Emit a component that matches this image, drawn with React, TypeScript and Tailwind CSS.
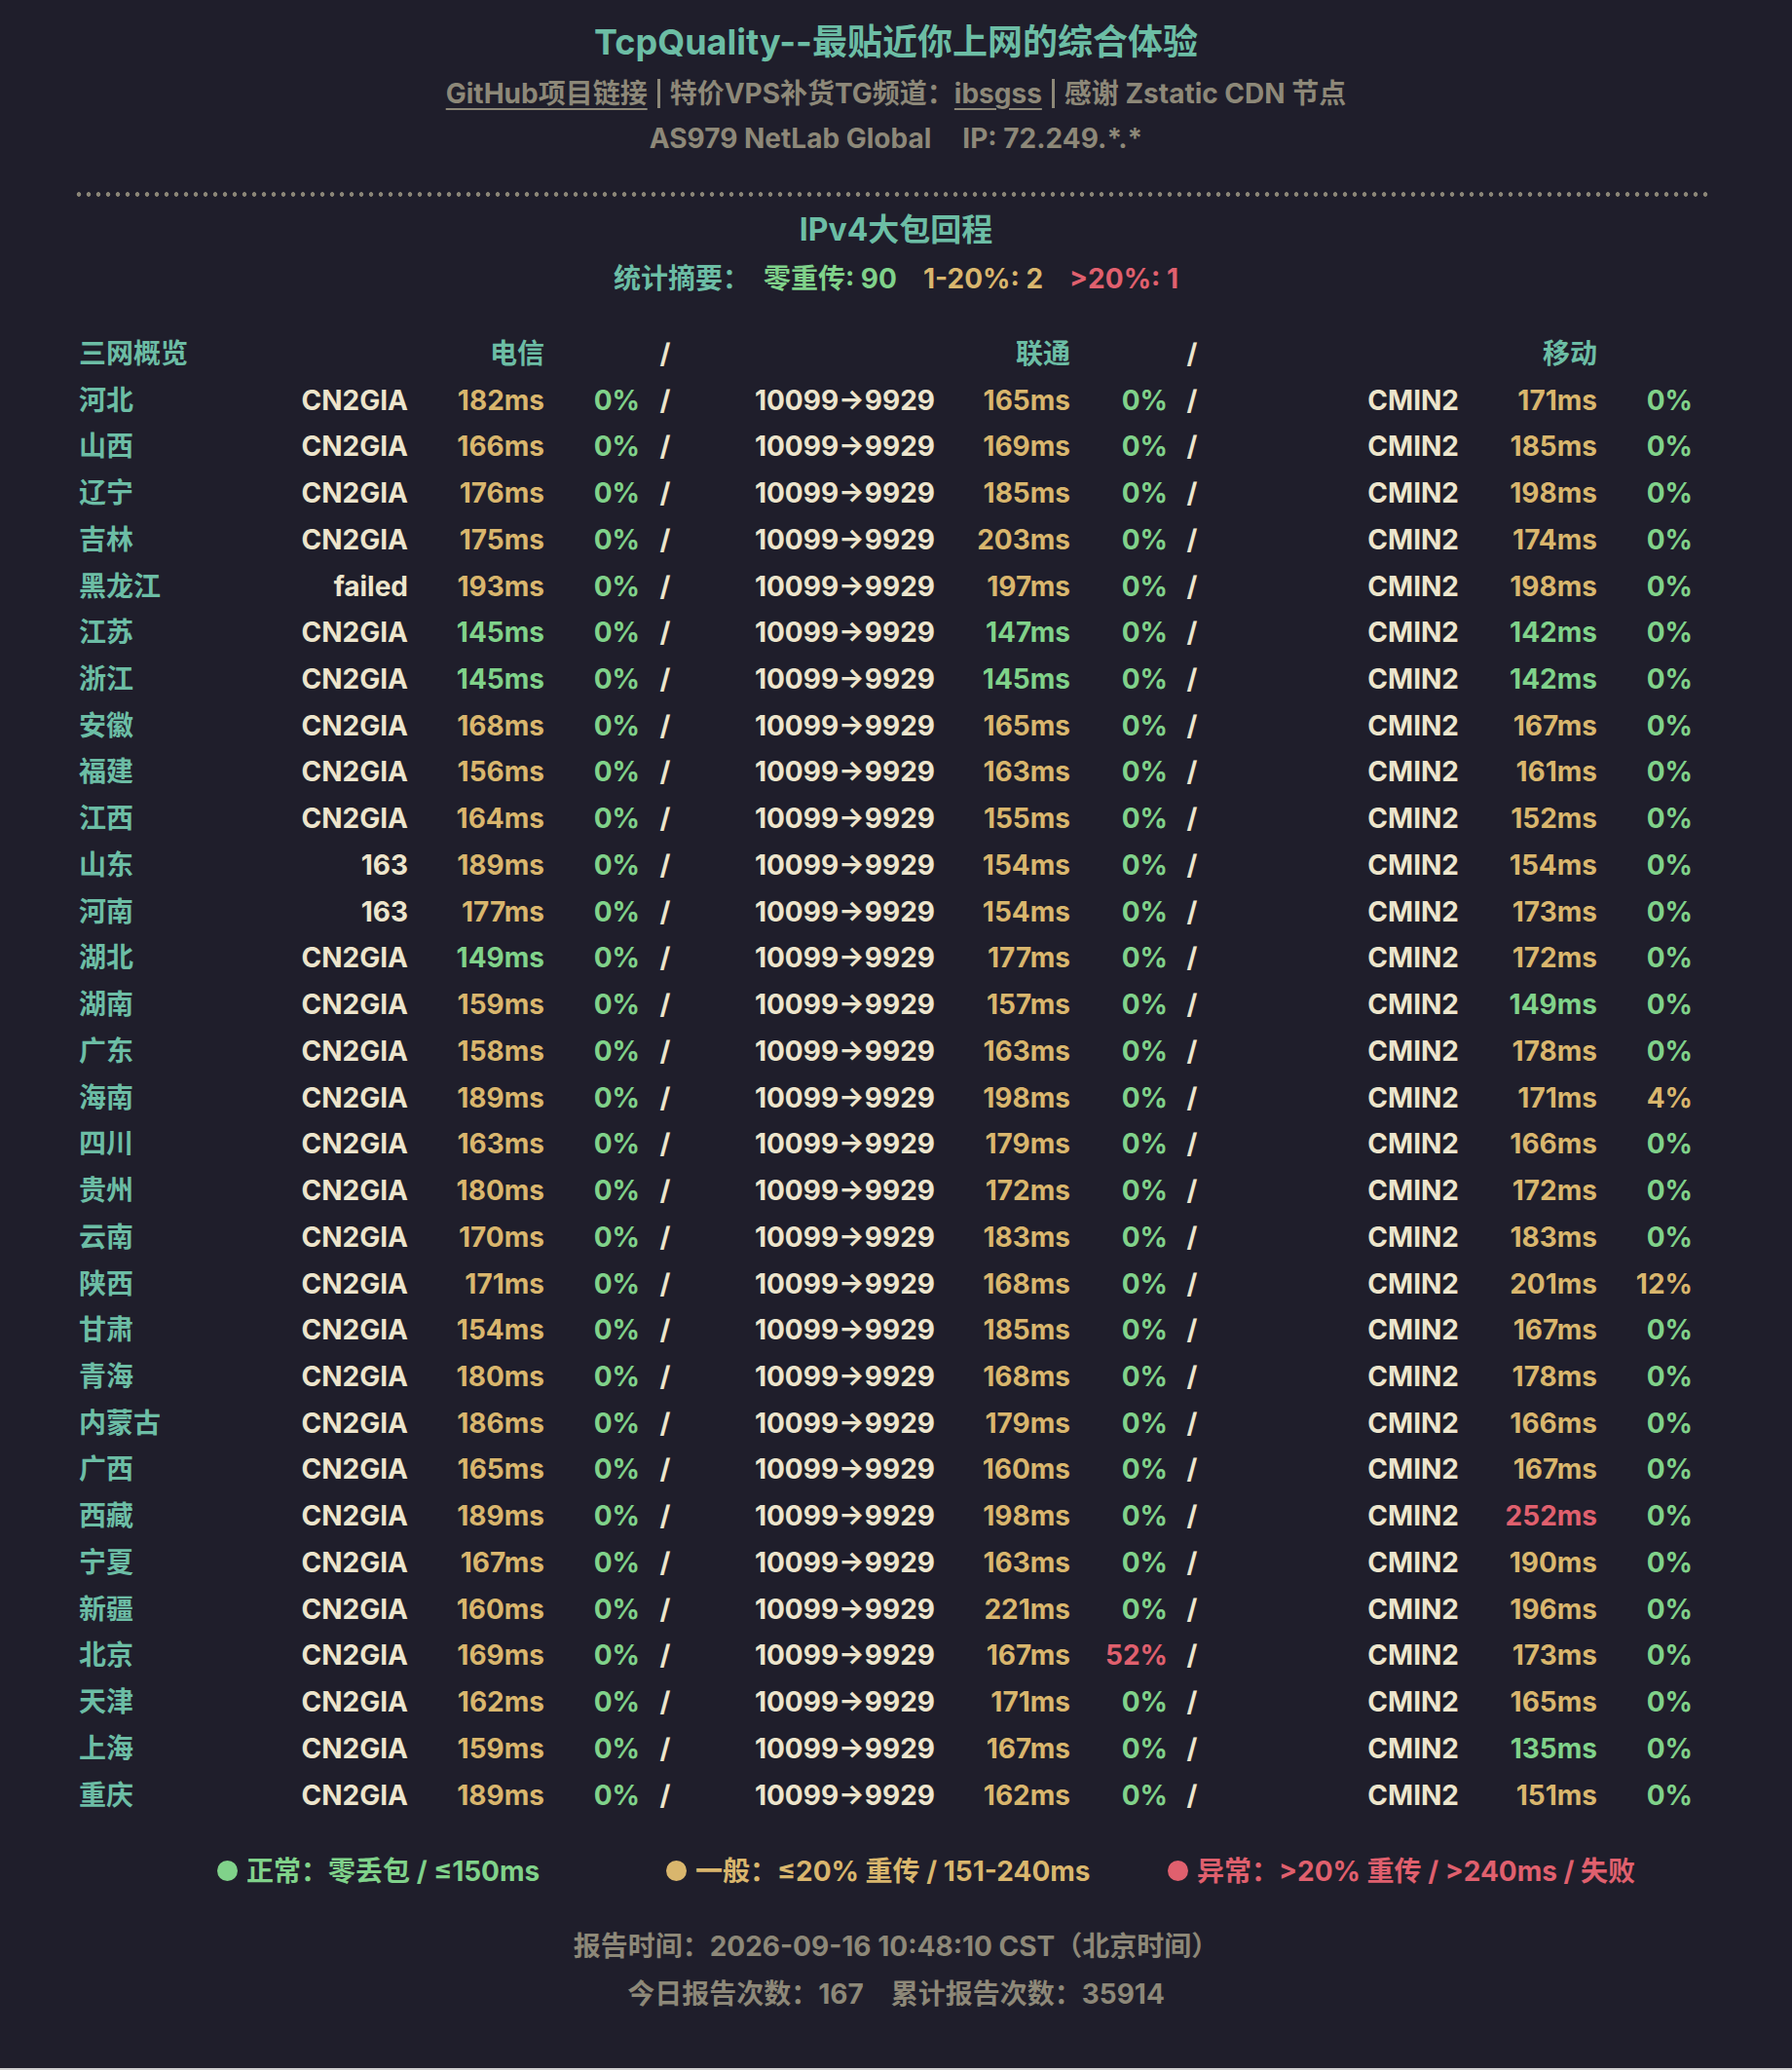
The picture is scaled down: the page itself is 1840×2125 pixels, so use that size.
import React from "react";

type Row = [string, string, number, number, number, number, number, number];

const rows: Row[] = [
  ["河北", "CN2GIA", 182, 0, 165, 0, 171, 0],
  ["山西", "CN2GIA", 166, 0, 169, 0, 185, 0],
  ["辽宁", "CN2GIA", 176, 0, 185, 0, 198, 0],
  ["吉林", "CN2GIA", 175, 0, 203, 0, 174, 0],
  ["黑龙江", "failed", 193, 0, 197, 0, 198, 0],
  ["江苏", "CN2GIA", 145, 0, 147, 0, 142, 0],
  ["浙江", "CN2GIA", 145, 0, 145, 0, 142, 0],
  ["安徽", "CN2GIA", 168, 0, 165, 0, 167, 0],
  ["福建", "CN2GIA", 156, 0, 163, 0, 161, 0],
  ["江西", "CN2GIA", 164, 0, 155, 0, 152, 0],
  ["山东", "163", 189, 0, 154, 0, 154, 0],
  ["河南", "163", 177, 0, 154, 0, 173, 0],
  ["湖北", "CN2GIA", 149, 0, 177, 0, 172, 0],
  ["湖南", "CN2GIA", 159, 0, 157, 0, 149, 0],
  ["广东", "CN2GIA", 158, 0, 163, 0, 178, 0],
  ["海南", "CN2GIA", 189, 0, 198, 0, 171, 4],
  ["四川", "CN2GIA", 163, 0, 179, 0, 166, 0],
  ["贵州", "CN2GIA", 180, 0, 172, 0, 172, 0],
  ["云南", "CN2GIA", 170, 0, 183, 0, 183, 0],
  ["陕西", "CN2GIA", 171, 0, 168, 0, 201, 12],
  ["甘肃", "CN2GIA", 154, 0, 185, 0, 167, 0],
  ["青海", "CN2GIA", 180, 0, 168, 0, 178, 0],
  ["内蒙古", "CN2GIA", 186, 0, 179, 0, 166, 0],
  ["广西", "CN2GIA", 165, 0, 160, 0, 167, 0],
  ["西藏", "CN2GIA", 189, 0, 198, 0, 252, 0],
  ["宁夏", "CN2GIA", 167, 0, 163, 0, 190, 0],
  ["新疆", "CN2GIA", 160, 0, 221, 0, 196, 0],
  ["北京", "CN2GIA", 169, 0, 167, 52, 173, 0],
  ["天津", "CN2GIA", 162, 0, 171, 0, 165, 0],
  ["上海", "CN2GIA", 159, 0, 167, 0, 135, 0],
  ["重庆", "CN2GIA", 189, 0, 162, 0, 151, 0],
];

const GREEN = "text-[#80d28a]";
const YELLOW = "text-[#d9b66d]";
const RED = "text-[#e0606e]";

const msColor = (ms: number) => (ms <= 150 ? GREEN : ms <= 240 ? YELLOW : RED);
const lossColor = (p: number) => (p === 0 ? GREEN : p <= 20 ? YELLOW : RED);

const GRID =
  "grid grid-cols-[222px_119px_140px_98px_52px_251px_139px_100px_50px_249px_142px_98px] h-[47.74px] items-center";

function Slash() {
  return <div className="text-center text-[#ede5cc]">/</div>;
}

export default function App() {
  return (
    <div className="min-h-[2125px] bg-[#d0d0d0]">
      <div className="h-[2123px] bg-[#1f1e2b] font-['Inter','Noto_Sans_CJK_SC',sans-serif] font-bold text-[28px] text-[#8d8878]">
        <div className="pt-[19px] text-center">
          <h1 className="text-[36px] leading-[48px] font-bold text-[#6cbda5]">
            TcpQuality--最贴近你上网的综合体验
          </h1>
          <div className="mt-[9px] leading-[40px] flex justify-center items-center">
            <span className="underline decoration-2 underline-offset-[5px]">GitHub项目链接</span>
            <span className="inline-block w-[3px] h-[30px] mx-[10px] bg-[#8d8878]" />
            <span>特价VPS补货TG频道：</span>
            <span className="underline decoration-2 underline-offset-[5px]">ibsgss</span>
            <span className="inline-block w-[3px] h-[30px] mx-[10px] bg-[#8d8878]" />
            <span>感谢 Zstatic CDN 节点</span>
          </div>
          <div className="mt-[6px] leading-[40px]">
            <span>AS979 NetLab Global</span>
            <span className="ml-[32px]">IP: 72.249.*.*</span>
          </div>
        </div>

        <div className="ml-[76px] mr-[84px] mt-[35px] h-[5px] bg-[radial-gradient(circle,#8a8577_2px,transparent_2.6px)] bg-[length:10px_5px]" />

        <div className="mt-[14px] text-center text-[32px] leading-[40px] text-[#6cbda5]">IPv4大包回程</div>
        <div className="mt-[10px] text-center leading-[40px]">
          <span className="text-[#6cbda5]">统计摘要：</span>
          <span className={`ml-[14px] ${GREEN}`}>零重传: 90</span>
          <span className={`ml-[27px] ${YELLOW}`}>1-20%: 2</span>
          <span className={`ml-[27px] ${RED}`}>&gt;20%: 1</span>
        </div>

        <div className="mt-[33px] px-[78px]">
          <div className={GRID}>
            <div className="pl-[3px] text-[#6cbda5]">三网概览</div>
            <div />
            <div className="text-right text-[#6cbda5]">电信</div>
            <div />
            <Slash />
            <div />
            <div className="text-right text-[#6cbda5]">联通</div>
            <div />
            <Slash />
            <div />
            <div className="text-right text-[#6cbda5]">移动</div>
            <div />
          </div>
          {rows.map((r) => (
            <div key={r[0]} className={GRID}>
              <div className="pl-[3px] text-[#6cbda5]">{r[0]}</div>
              <div className="text-right text-[#ede5cc]">{r[1]}</div>
              <div className={`text-right ${msColor(r[2])}`}>{r[2]}ms</div>
              <div className={`text-right ${lossColor(r[3])}`}>{r[3]}%</div>
              <Slash />
              <div className="text-right text-[#ede5cc]">10099→9929</div>
              <div className={`text-right ${msColor(r[4])}`}>{r[4]}ms</div>
              <div className={`text-right ${lossColor(r[5])}`}>{r[5]}%</div>
              <Slash />
              <div className="text-right text-[#ede5cc]">CMIN2</div>
              <div className={`text-right ${msColor(r[6])}`}>{r[6]}ms</div>
              <div className={`text-right ${lossColor(r[7])}`}>{r[7]}%</div>
            </div>
          ))}
        </div>

        <div className="mt-[34px] flex items-center pl-[223px] leading-[40px]">
          <div className={`w-[461px] flex items-center ${GREEN}`}>
            <span className="inline-block w-[21px] h-[21px] rounded-full bg-[#80d28a] mr-[9px]" />
            <span>正常：零丢包 / ≤150ms</span>
          </div>
          <div className={`w-[515px] flex items-center ${YELLOW}`}>
            <span className="inline-block w-[21px] h-[21px] rounded-full bg-[#d9b66d] mr-[9px]" />
            <span>一般：≤20% 重传 / 151-240ms</span>
          </div>
          <div className={`flex items-center ${RED}`}>
            <span className="inline-block w-[21px] h-[21px] rounded-full bg-[#e0606e] mr-[9px]" />
            <span>异常：&gt;20% 重传 / &gt;240ms / 失败</span>
          </div>
        </div>

        <div className="mt-[37px] text-center leading-[40px]">报告时间：2026-09-16 10:48:10 CST（北京时间）</div>
        <div className="mt-[9px] text-center leading-[40px]">
          <span>今日报告次数：167</span>
          <span className="ml-[28px]">累计报告次数：35914</span>
        </div>
      </div>
    </div>
  );
}
